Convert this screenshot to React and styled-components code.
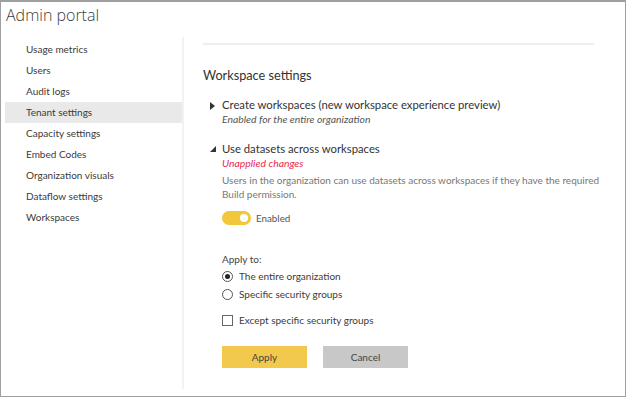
import { useState } from "react";
import styled, { createGlobalStyle } from "styled-components";

const Global = createGlobalStyle`
  html, body { margin: 0; padding: 0; background: #ffffff; }
  body { font-family: Lato, "Open Sans", sans-serif; color: #333333; }
  * { box-sizing: border-box; }
`;

const Frame = styled.div`
  width: 626px;
  height: 397px;
  border: 1px solid #a0a0a0;
  border-top-width: 2px;
  display: flex;
  flex-direction: column;
  overflow: hidden;
`;

const Title = styled.h1`
  margin: 0;
  padding: 2px 0 0 5px;
  height: 35px;
  font-family: "Open Sans", sans-serif;
  font-size: 16px;
  font-weight: 300;
  color: #3c3c3c;
`;

const Body = styled.div`
  display: flex;
  flex: 1;
  padding-bottom: 7px;
`;

const Sidebar = styled.nav`
  flex-shrink: 0;
  width: 179px;
  margin-left: 4px;
  border-right: 2px solid #f2f2f2;
  padding-top: 2px;
  display: flex;
  flex-direction: column;
`;

const NavItem = styled.div`
  height: 21px;
  line-height: 21px;
  padding-left: 21px;
  font-size: 10px;
  color: #3a3a3a;
  background: ${(p) => (p.$active ? "#e9e9e9" : "transparent")};
`;

const Main = styled.main`
  flex: 1;
  min-width: 0;
  padding: 6px 0 0 19px;
`;

const Rule = styled.hr`
  margin: 0;
  border: none;
  border-top: 2px solid #eeeeee;
  width: 391px;
`;

const SectionTitle = styled.h2`
  margin: 22px 0 0 0;
  font-size: 12.7px;
  line-height: 17px;
  font-weight: 400;
  color: #333333;
`;

const Setting = styled.div`
  display: grid;
  grid-template-columns: 19px 1fr;
  margin-top: ${(p) => p.$mt}px;
`;

const Caret = styled.span`
  display: flex;
  justify-content: center;
  padding-top: 5px;
  svg { display: block; }
`;

const SettingTitle = styled.div`
  font-size: 11.3px;
  line-height: 16px;
  color: #333333;
`;

const SubNote = styled.div`
  font-size: 10.4px;
  font-style: italic;
  line-height: 13px;
  color: ${(p) => (p.$alert ? "#e8284e" : "#555555")};
`;

const Description = styled.p`
  margin: 4px 0 0 0;
  font-size: 10px;
  line-height: 13.5px;
  color: #777777;
  width: 400px;
`;

const ToggleRow = styled.label`
  display: flex;
  align-items: center;
  gap: 5px;
  margin-top: 10px;
  font-size: 9.8px;
  color: #555555;
  cursor: pointer;
`;

const Track = styled.span`
  width: 29px;
  height: 14px;
  border-radius: 7px;
  background: ${(p) => (p.$on ? "#f2c73c" : "#c8c8c8")};
  display: flex;
  align-items: center;
  justify-content: ${(p) => (p.$on ? "flex-end" : "flex-start")};
  padding: 0 3px;
`;

const Knob = styled.span`
  width: 8px;
  height: 8px;
  border-radius: 50%;
  background: #ffffff;
`;

const ApplyLabel = styled.div`
  margin-top: 28px;
  font-size: 10px;
  color: #444444;
`;

const OptionRow = styled.label`
  display: flex;
  align-items: center;
  gap: 6px;
  height: 18px;
  margin-top: ${(p) => p.$mt || 0}px;
  font-size: 10px;
  color: #3c3c3c;
  cursor: pointer;
`;

const Radio = styled.span`
  width: 11px;
  height: 11px;
  border-radius: 50%;
  border: 1px solid #555555;
  display: flex;
  align-items: center;
  justify-content: center;
  &::after {
    content: "";
    width: 5px;
    height: 5px;
    border-radius: 50%;
    background: ${(p) => (p.$checked ? "#222222" : "transparent")};
  }
`;

const Box = styled.span`
  width: 11px;
  height: 11px;
  border: 1px solid #666666;
  background: ${(p) => (p.$checked ? "#555555" : "#ffffff")};
`;

const Buttons = styled.div`
  display: flex;
  gap: 16px;
  margin-top: 17px;
`;

const Button = styled.button`
  width: 85px;
  height: 22px;
  border: none;
  font-family: inherit;
  font-size: 10px;
  color: #444444;
  background: ${(p) => (p.$primary ? "#f2c94c" : "#c8c8c8")};
  cursor: pointer;
`;

const navItems = [
  "Usage metrics",
  "Users",
  "Audit logs",
  "Tenant settings",
  "Capacity settings",
  "Embed Codes",
  "Organization visuals",
  "Dataflow settings",
  "Workspaces",
];

function CaretIcon({ open }) {
  return open ? (
    <svg width="6" height="6" viewBox="0 0 6 6">
      <path d="M6 0 L6 6 L0 6 Z" fill="#333" />
    </svg>
  ) : (
    <svg width="5" height="8" viewBox="0 0 5 8">
      <path d="M0 0 L5 4 L0 8 Z" fill="#333" />
    </svg>
  );
}

export default function App() {
  const [enabled, setEnabled] = useState(true);
  const [scope, setScope] = useState("org");
  const [except, setExcept] = useState(false);

  return (
    <>
      <Global />
      <Frame>
        <Title>Admin portal</Title>
        <Body>
          <Sidebar>
            {navItems.map((item) => (
              <NavItem key={item} $active={item === "Tenant settings"}>
                {item}
              </NavItem>
            ))}
          </Sidebar>
          <Main>
            <Rule />
            <SectionTitle>Workspace settings</SectionTitle>
            <Setting $mt={13}>
              <Caret>
                <CaretIcon />
              </Caret>
              <div>
                <SettingTitle>Create workspaces (new workspace experience preview)</SettingTitle>
                <SubNote>Enabled for the entire organization</SubNote>
              </div>
            </Setting>
            <Setting $mt={15}>
              <Caret>
                <CaretIcon open />
              </Caret>
              <div>
                <SettingTitle>Use datasets across workspaces</SettingTitle>
                <SubNote $alert>Unapplied changes</SubNote>
                <Description>
                  Users in the organization can use datasets across workspaces if they have the required
                  Build permission.
                </Description>
                <ToggleRow onClick={() => setEnabled((v) => !v)}>
                  <Track $on={enabled}>
                    <Knob />
                  </Track>
                  {enabled ? "Enabled" : "Disabled"}
                </ToggleRow>
                <ApplyLabel>Apply to:</ApplyLabel>
                <OptionRow $mt={2} onClick={() => setScope("org")}>
                  <Radio $checked={scope === "org"} />
                  The entire organization
                </OptionRow>
                <OptionRow onClick={() => setScope("groups")}>
                  <Radio $checked={scope === "groups"} />
                  Specific security groups
                </OptionRow>
                <OptionRow $mt={8} onClick={() => setExcept((v) => !v)}>
                  <Box $checked={except} />
                  Except specific security groups
                </OptionRow>
                <Buttons>
                  <Button $primary>Apply</Button>
                  <Button>Cancel</Button>
                </Buttons>
              </div>
            </Setting>
          </Main>
        </Body>
      </Frame>
    </>
  );
}
